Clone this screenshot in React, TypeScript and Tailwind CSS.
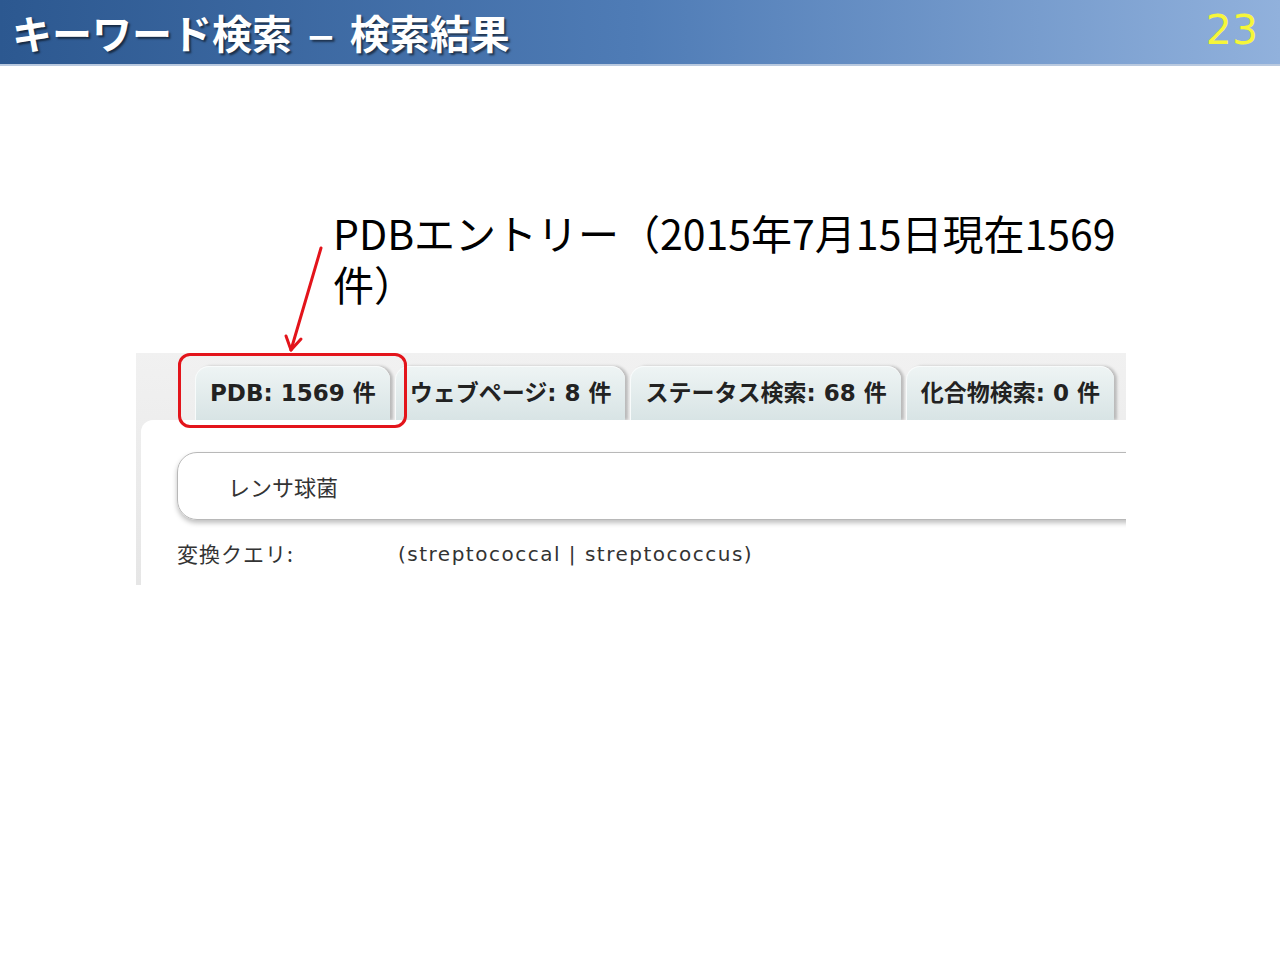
import React from 'react';

const tabs = ['PDB: 1569 件', 'ウェブページ: 8 件', 'ステータス検索: 68 件', '化合物検索: 0 件'];

const App = () => {
    return (
        <div className="w-[1280px] h-[960px] bg-white overflow-hidden font-['Noto_Sans_CJK_JP',sans-serif]">
            {/* Slide header */}
            <header className="h-[66px] flex items-center justify-between pl-[12px] pr-[22px] bg-gradient-to-r from-[#2c5890] via-[#4f7cb6] to-[#91b1dc] border-b-2 border-[#b9c9df]">
                <h1 className="flex items-center text-white text-[40px] font-bold [text-shadow:2px_2px_2px_rgba(0,0,0,0.55)]">
                    <span>キーワード検索</span>
                    <span className="mx-[18px] inline-block scale-x-125">–</span>
                    <span>検索結果</span>
                </h1>
                <span className="text-[#f6f63a] text-[41px] font-['DejaVu_Sans',sans-serif] leading-none -mt-[4px]">23</span>
            </header>

            <div className="relative pt-[141px]">
                {/* Annotation */}
                <p className="ml-[333px] text-[41px] leading-[51px] text-black font-['Noto_Sans_CJK_JP',sans-serif]">
                    PDBエントリー（2015年7月15日現在1569
                    <br />
                    件）
                </p>

                {/* Arrow */}
                <svg className="absolute left-[280px] top-[180px]" width="50" height="110" viewBox="0 0 50 110">
                    <path d="M41 2 L11 104" stroke="#e3141b" strokeWidth="3" fill="none" strokeLinecap="round" />
                    <path d="M6 90 L11 104 L21 93" stroke="#e3141b" strokeWidth="3" fill="none" strokeLinecap="round" strokeLinejoin="round" />
                </svg>

                {/* Screenshot */}
                <div className="relative ml-[136px] mt-[44px] w-[990px] h-[232px] overflow-hidden bg-gradient-to-b from-[#f1f1f1] to-[#e6e6e6] flex flex-col">
                    <div className="flex items-end gap-[5px] pl-[59px] pt-[13px] h-[67px] shrink-0">
                        {tabs.map((tab, index) => (
                            <div
                                key={index}
                                className="h-[54px] flex items-center pl-[14px] pr-[14px] rounded-t-[14px] bg-gradient-to-b from-[#eef4f4] to-[#d8e4e5] border-t border-l border-[#f8fbfb] shadow-[3px_0_3px_rgba(0,0,0,0.22)] text-[#222] text-[23px] font-bold whitespace-nowrap font-['DejaVu_Sans','Noto_Sans_CJK_JP',sans-serif]"
                            >
                                {tab}
                            </div>
                        ))}
                    </div>

                    <div className="flex-1 ml-[5px] bg-white rounded-tl-[12px] pt-[32px] pl-[36px]">
                        <div className="w-[1000px] h-[68px] rounded-[20px] border border-[#b8b8b8] shadow-[0_3px_5px_rgba(0,0,0,0.25)] flex items-center pl-[50px] text-[22px] text-[#333]">
                            レンサ球菌
                        </div>
                        <div className="flex items-center mt-[18px] text-[#333]">
                            <span className="w-[221px] text-[21px] tracking-[1px]">変換クエリ:</span>
                            <span className="text-[20px] tracking-[1.5px] font-['DejaVu_Sans',sans-serif]">(streptococcal | streptococcus)</span>
                        </div>
                    </div>

                    {/* Highlight box */}
                    <div className="absolute left-[42px] top-0 w-[229px] h-[75px] border-[3px] border-[#e3141b] rounded-[12px]" />
                </div>
            </div>
        </div>
    );
};

export default App;
